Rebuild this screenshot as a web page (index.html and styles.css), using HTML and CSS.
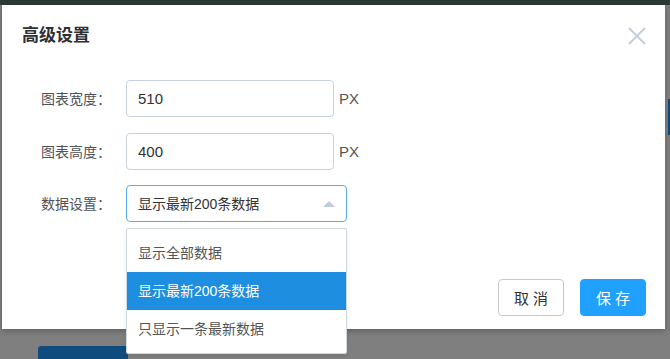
FILE: index.html
```html
<!DOCTYPE html>
<html lang="zh-CN">
<head>
    <meta charset="UTF-8">
    <title>高级设置</title>
    <link rel="stylesheet" href="styles.css">
</head>
<body>

<!-- 背景页面（已被遮罩压暗） -->
<div class="page">
    <div class="page-header"></div>
    <div class="page-side"></div>
    <div class="page-btn"></div>
</div>

<!-- 弹窗 -->
<div class="dialog">
    <div class="dialog-header">
        <span class="dialog-title">高级设置</span>
        <span class="dialog-close">
            <svg width="18" height="18" viewBox="0 0 18 18">
                <path d="M1 1 L17 17 M17 1 L1 17" stroke="#c3cfdc" stroke-width="2" fill="none"/>
            </svg>
        </span>
    </div>

    <div class="dialog-body">
        <div class="form-row">
            <label class="form-label">图表宽度：</label>
            <input class="form-input" type="text" value="510">
            <span class="unit">PX</span>
        </div>
        <div class="form-row">
            <label class="form-label">图表高度：</label>
            <input class="form-input" type="text" value="400">
            <span class="unit">PX</span>
        </div>
        <div class="form-row">
            <label class="form-label">数据设置：</label>
            <div class="select">
                <span class="select-text">显示最新200条数据</span>
                <span class="select-arrow"></span>
                <ul class="select-menu">
                    <li>显示全部数据</li>
                    <li class="active">显示最新200条数据</li>
                    <li>只显示一条最新数据</li>
                </ul>
            </div>
        </div>
    </div>

    <div class="dialog-footer">
        <button class="btn">取消</button>
        <button class="btn btn-primary">保存</button>
    </div>
</div>

</body>
</html>
```

FILE: styles.css
```css
body {
    margin: 0;
    background-color: #7f7f7f;
    font-family: 'Liberation Sans', 'Noto Sans CJK SC', sans-serif;
    font-size: 14px;
    color: #333;
    overflow: hidden;
}
.page {
    height: 359px;
}
.page-header {
    height: 5px;
    background-color: #2b3b36;
}
.page-side {
    position: absolute;
    right: 0;
    top: 99px;
    width: 2px;
    height: 36px;
    background-color: #0e4c7e;
}
.page-btn {
    position: absolute;
    left: 38px;
    top: 346px;
    width: 90px;
    height: 30px;
    border-radius: 3px;
    background-color: #0f4c7d;
}

/* 弹窗 */
.dialog {
    position: absolute;
    left: 2px;
    top: 5px;
    width: 663px;
    height: 324px;
    background-color: #fff;
    box-shadow: 0 2px 6px rgba(0,0,0,0.25);
    display: flex;
    flex-direction: column;
}
.dialog-header {
    display: flex;
    justify-content: space-between;
    align-items: center;
    padding: 18px 19px 0 20px;
    height: 24px;
}
.dialog-title {
    font-size: 17px;
    font-weight: bold;
    color: #2d2f33;
    line-height: 24px;
    margin-top: 1px;
}
.dialog-close {
    display: flex;
    margin-top: 2px;
}
.dialog-body {
    padding: 33px 0 0 0;
    display: flex;
    flex-direction: column;
    gap: 15.5px;
}
.form-row {
    display: flex;
    align-items: center;
    height: 37px;
}
.form-label {
    box-sizing: border-box;
    width: 124px;
    text-align: right;
    color: #4f5257;
    padding-right: 15px;
    margin-top: -1px;
}
.form-input {
    box-sizing: border-box;
    width: 208px;
    height: 37px;
    border: 1px solid #c8d3df;
    border-radius: 4px;
    padding: 0 11px;
    font-family: inherit;
    font-size: 15px;
    color: #333;
    outline: none;
}
.unit {
    margin-left: 5px;
    font-size: 15px;
    color: #555;
}
.select {
    position: relative;
    box-sizing: border-box;
    width: 221px;
    height: 37px;
    border: 1px solid #59acf0;
    border-radius: 4px;
    padding: 0 11px;
    display: flex;
    align-items: center;
    justify-content: space-between;
}
.select-text {
    color: #333;
    margin-top: -1px;
}
.select-arrow {
    width: 0;
    height: 0;
    border-left: 6px solid transparent;
    border-right: 6px solid transparent;
    border-bottom: 6px solid #c0ccda;
}
.select-menu {
    position: absolute;
    left: -1px;
    top: 42px;
    box-sizing: border-box;
    width: 221px;
    margin: 0;
    padding: 5px 0;
    list-style: none;
    background-color: #fff;
    border: 1px solid #d1d9e3;
    border-radius: 2px;
    box-shadow: 0 2px 4px rgba(0,0,0,0.08);
    z-index: 2;
}
.select-menu li {
    height: 38px;
    line-height: 38px;
    padding: 0 11px;
    color: #555;
}
.select-menu li.active {
    background-color: #1e8fe0;
    color: #fff;
}
.dialog-footer {
    display: flex;
    justify-content: flex-end;
    gap: 16px;
    padding: 0 19px 0 0;
    margin-top: 57px;
}
.btn {
    box-sizing: border-box;
    width: 66px;
    height: 37px;
    border: 1px solid #c9c9c9;
    border-radius: 4px;
    background-color: #fff;
    font-family: inherit;
    font-size: 15px;
    letter-spacing: 4px;
    padding: 0 0 0 4px;
    color: #333;
}
.btn-primary {
    border-color: #20a0ff;
    background-color: #20a0ff;
    color: #fff;
}
```
